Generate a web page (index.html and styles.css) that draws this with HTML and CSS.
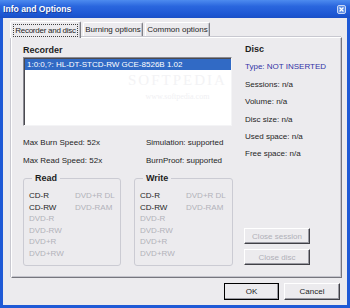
FILE: index.html
```html
<!DOCTYPE html>
<html lang="en">
<head>
    <meta charset="UTF-8">
    <title>Info and Options</title>
    <link rel="stylesheet" href="styles.css">
</head>
<body>
    <div class="window">
        <div class="titlebar">
            <span class="title">Info and Options</span>
            <span class="close">
                <svg width="9" height="9" viewBox="0 0 9 9">
                    <path d="M2 2 L7 7 M7 2 L2 7" stroke="#fff" stroke-width="1.6"/>
                </svg>
            </span>
        </div>
        <div class="client">
            <div class="tabs">
                <div class="tab active"><span class="focus">Recorder and disc</span></div>
                <div class="tab tab-burn">Burning options</div>
                <div class="tab tab-common">Common options</div>
            </div>

            <div class="panel">
                <div class="col-left">
                    <div class="heading">Recorder</div>
                    <div class="listbox">
                        <div class="list-item selected">1:0:0,?: HL-DT-STCD-RW GCE-8526B 1.02</div>
                        <!-- watermark from the screenshot -->
                        <div class="watermark">
                            <span class="wm-big">SOFTPEDIA</span>
                            <span class="wm-small">www.softpedia.com</span>
                        </div>
                    </div>

                    <div class="speeds">
                        <span>Max Burn Speed: 52x</span>
                        <span>Simulation: supported</span>
                        <span>Max Read Speed: 52x</span>
                        <span>BurnProof: supported</span>
                    </div>

                    <div class="groups">
                        <fieldset class="group group-read">
                            <legend>Read</legend>
                            <div class="media">
                                <div class="media-col first">
                                    <span class="on">CD-R</span>
                                    <span class="on">CD-RW</span>
                                    <span>DVD-R</span>
                                    <span>DVD-RW</span>
                                    <span>DVD+R</span>
                                    <span>DVD+RW</span>
                                </div>
                                <div class="media-col">
                                    <span>DVD+R DL</span>
                                    <span>DVD-RAM</span>
                                </div>
                            </div>
                        </fieldset>
                        <fieldset class="group group-write">
                            <legend>Write</legend>
                            <div class="media">
                                <div class="media-col first">
                                    <span class="on">CD-R</span>
                                    <span class="on">CD-RW</span>
                                    <span>DVD-R</span>
                                    <span>DVD-RW</span>
                                    <span>DVD+R</span>
                                    <span>DVD+RW</span>
                                </div>
                                <div class="media-col">
                                    <span>DVD+R DL</span>
                                    <span>DVD-RAM</span>
                                </div>
                            </div>
                        </fieldset>
                    </div>
                </div>

                <div class="col-right">
                    <div class="heading disc-heading">Disc</div>
                    <div class="info type">Type: NOT INSERTED</div>
                    <div class="info">Sessions: n/a</div>
                    <div class="info">Volume: n/a</div>
                    <div class="info">Disc size: n/a</div>
                    <div class="info">Used space: n/a</div>
                    <div class="info">Free space: n/a</div>

                    <div class="actions">
                        <button class="btn btn-small" disabled>Close session</button>
                        <button class="btn btn-small" disabled>Close disc</button>
                    </div>
                </div>
            </div>

            <div class="footer">
                <button class="btn btn-ok">OK</button>
                <button class="btn btn-cancel">Cancel</button>
            </div>
        </div>
    </div>
</body>
</html>
```

FILE: styles.css
```css
* {
    margin: 0;
    padding: 0;
    box-sizing: border-box;
}

body {
    font-family: 'Liberation Sans', Arial, sans-serif;
    font-size: 8px;
    color: #1e1e1e;
    background-color: #1d58d4;
}

.window {
    width: 350px;
    height: 308px;
    display: flex;
    flex-direction: column;
    background-color: #1f5ad6;
}

.titlebar {
    height: 18px;
    display: flex;
    align-items: center;
    justify-content: space-between;
    padding: 0 4px 0 3px;
    background: linear-gradient(#4d8bef, #2a66de 35%, #1d57d3 80%, #1a4fc6);
}

.title {
    color: #ffffff;
    font-weight: bold;
    font-size: 8.6px;
    text-shadow: 1px 1px 0 #1a3f9a;
}

.close {
    width: 9px;
    height: 9px;
    display: flex;
    background-color: #5f8fe6;
    border: 1px solid #c9d8f6;
    border-radius: 2px;
    align-items: center;
    justify-content: center;
}

.close svg {
    display: block;
}

.client {
    flex: 1;
    margin: 0 3px 3px;
    padding: 3px 5px 0 8px;
    display: flex;
    flex-direction: column;
    background-color: #ecebee;
}

/* tabs */
.tabs {
    height: 16px;
    display: flex;
    align-items: flex-end;
    position: relative;
    z-index: 1;
}

.tab {
    height: 14px;
    margin-bottom: 1px;
    display: flex;
    align-items: center;
    justify-content: center;
    border-top: 1px solid #ffffff;
    border-left: 1px solid #ffffff;
    border-right: 1px solid #808086;
    border-radius: 2px 2px 0 0;
    box-shadow: inset -1px 0 0 #c4c4cc;
    white-space: nowrap;
}

.tab.active {
    width: 71px;
    height: 17px;
    margin-left: -1px;
    margin-bottom: -1px;
    background-color: #ecebee;
}

.focus {
    padding: 0 1px;
    line-height: 11px;
    letter-spacing: -0.25px;
    border: 1px dotted #404040;
}

.tab-burn {
    width: 60px;
    margin-left: 2px;
}

.tab-common {
    width: 65px;
    margin-left: 2px;
}

/* panel */
.panel {
    height: 241px;
    display: flex;
    padding-left: 11px;
    border-top: 1px solid #ffffff;
    border-left: 1px solid #ffffff;
    border-right: 1px solid #76767e;
    border-bottom: 1px solid #76767e;
    box-shadow: inset -1px -1px 0 #c4c4cc, -1px -1px 0 #c8c8d0;
}

.heading {
    font-weight: bold;
    font-size: 9px;
    line-height: 12px;
}

.col-left {
    width: 210px;
    padding-top: 6px;
}

.listbox {
    position: relative;
    width: 209px;
    height: 69px;
    margin-top: 1px;
    background-color: #ffffff;
    border-top: 1px solid #8a8a92;
    border-left: 1px solid #8a8a92;
    border-right: 1px solid #f4f4f6;
    border-bottom: 1px solid #f4f4f6;
    box-shadow: inset 1px 1px 0 #4a4a50;
    padding: 1px 0 0 1px;
    overflow: hidden;
}

.list-item {
    height: 11px;
    line-height: 11px;
    padding-left: 2px;
    white-space: nowrap;
}

.list-item.selected {
    background-color: #316ac5;
    color: #ffffff;
}

.watermark {
    position: absolute;
    left: 104px;
    top: 14px;
    display: flex;
    flex-direction: column;
    align-items: center;
    pointer-events: none;
}

.wm-big {
    font-family: 'Liberation Serif', serif;
    font-size: 15px;
    letter-spacing: 2px;
    color: #f3f3f5;
}

.wm-small {
    font-family: 'Liberation Serif', serif;
    font-size: 8px;
    margin-top: 3px;
    color: #f0f0f3;
}

.speeds {
    display: grid;
    grid-template-columns: 123px 1fr;
    row-gap: 6px;
    margin-top: 11px;
    line-height: 12px;
}

.groups {
    display: flex;
    gap: 13px;
    margin-top: 5px;
}

.group {
    height: 94px;
    border: 1px solid #cbcbd3;
    border-radius: 3px;
    padding: 0 0 0 5px;
}

.group-read {
    width: 98px;
}

.group-write {
    width: 99px;
}

.group legend {
    font-weight: bold;
    font-size: 9px;
    line-height: 12px;
    padding: 0 3px;
    margin-left: 3px;
}

.media {
    display: flex;
    padding-top: 6px;
    line-height: 11.5px;
}

.media-col {
    display: flex;
    flex-direction: column;
    color: #b2b2ba;
}

.media-col.first {
    width: 46px;
}

.media-col .on {
    color: #1e1e1e;
}

.col-right {
    flex: 1;
    display: flex;
    flex-direction: column;
    margin-left: 12px;
    padding-top: 3px;
    padding-bottom: 12px;
}

.disc-heading,
.info {
    line-height: 17.4px;
}

.type {
    color: #3333a6;
}

.actions {
    margin-top: auto;
    display: flex;
    flex-direction: column;
    gap: 5px;
    margin-left: -1px;
}

/* buttons */
.btn {
    font-family: inherit;
    font-size: 8px;
    color: #1e1e1e;
    background-color: #ecebee;
    border-top: 1px solid #ffffff;
    border-left: 1px solid #ffffff;
    border-right: 1px solid #404046;
    border-bottom: 1px solid #404046;
    box-shadow: inset -1px -1px 0 #9a9aa2;
}

.btn:disabled {
    color: #b0b0b8;
}

.btn-small {
    width: 66px;
    height: 16px;
}

.footer {
    display: flex;
    justify-content: flex-end;
    gap: 5px;
    margin-top: 5px;
    padding-right: 2px;
}

.btn-ok {
    width: 55px;
    height: 17px;
    outline: 1px solid #000000;
    outline-offset: -1px;
    border-right-color: #000000;
    border-bottom-color: #000000;
}

.btn-cancel {
    width: 56px;
    height: 17px;
}
```
